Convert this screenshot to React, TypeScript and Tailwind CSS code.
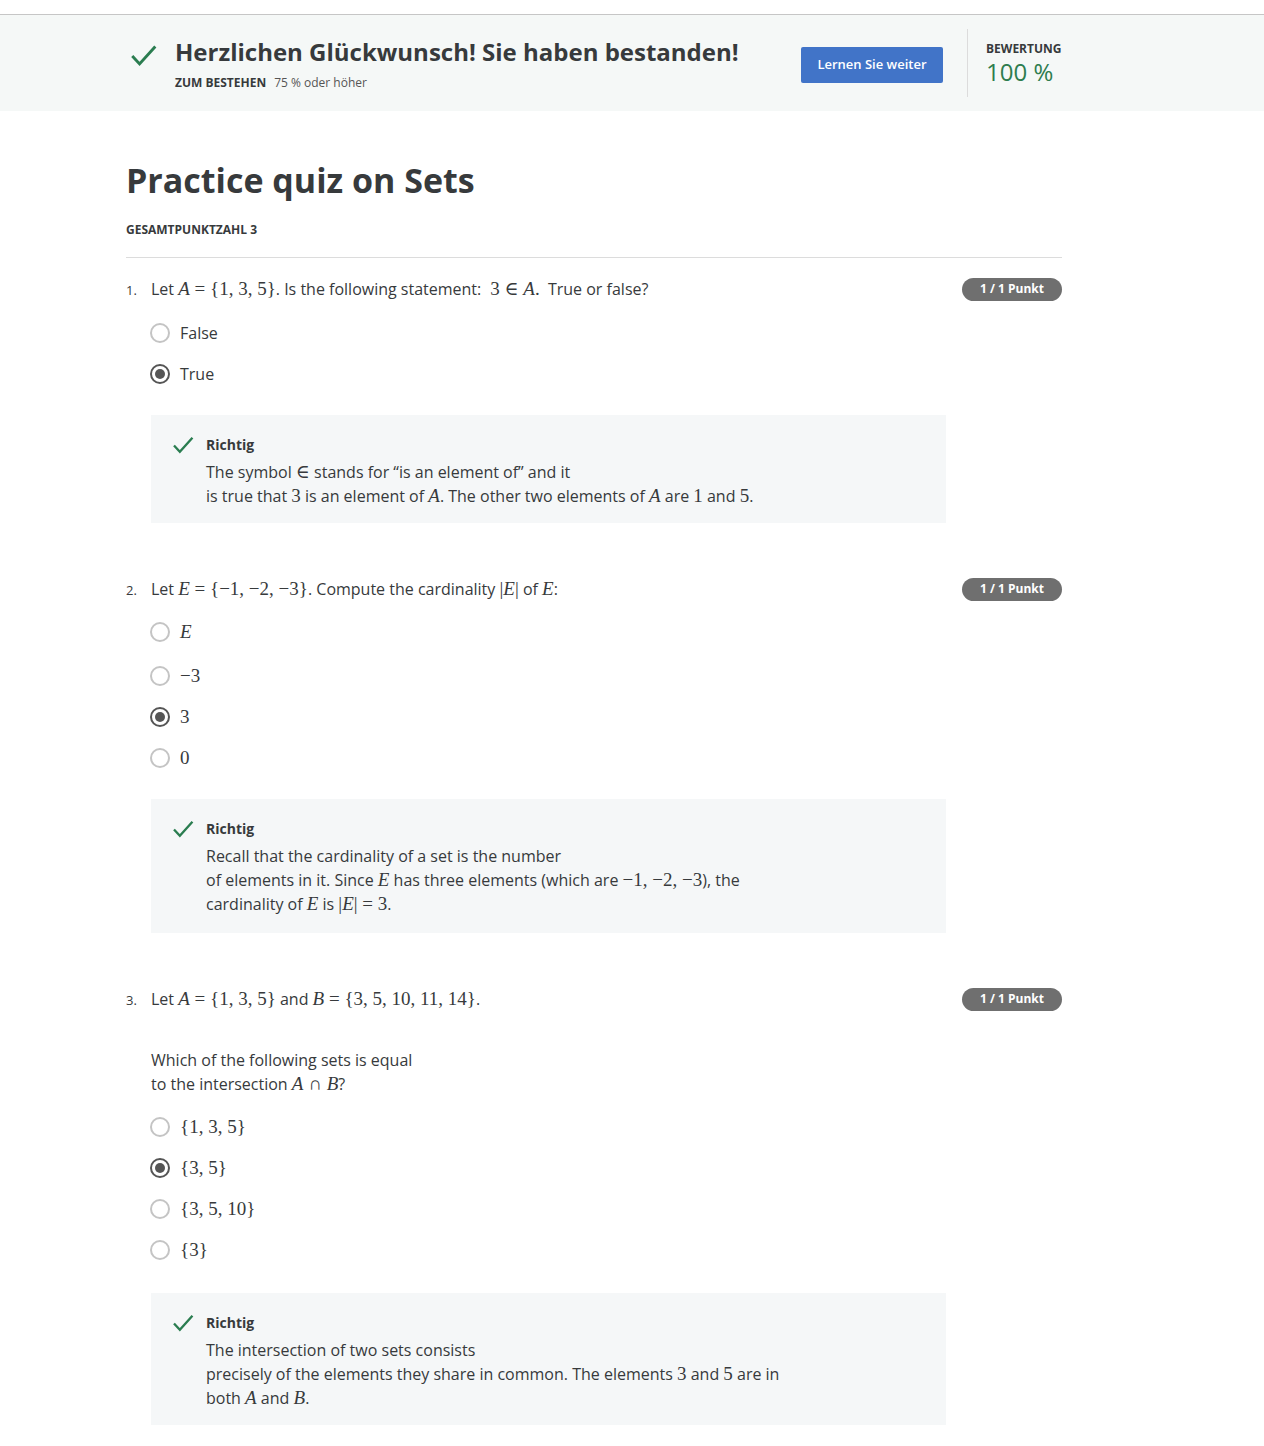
import type { ReactNode } from 'react';

const serif = "font-['Liberation_Serif','DejaVu_Serif',serif]";

function M({ children }: { children: ReactNode }) {
    return <span className={`${serif} text-[19px] leading-none`}>{children}</span>;
}

function V({ children }: { children: ReactNode }) {
    return <i className="italic">{children}</i>;
}

function Check({ className }: { className: string }) {
    return (
        <svg viewBox="0 0 24 20" className={className} fill="none">
            <path d="M2 10.5l6.5 7L22.5 2" stroke="#2a7d50" strokeWidth="2.6" />
        </svg>
    );
}

function Radio({ checked }: { checked?: boolean }) {
    if (checked) {
        return (
            <span className="flex h-5 w-5 shrink-0 items-center justify-center rounded-full border-2 border-[#555]">
                <span className="h-[10px] w-[10px] rounded-full bg-[#555]" />
            </span>
        );
    }
    return <span className="h-5 w-5 shrink-0 rounded-full border-2 border-[#c4c4c4]" />;
}

function Option({ checked, children }: { checked?: boolean; children: ReactNode }) {
    return (
        <div className="flex h-[41px] items-center gap-[10px] pl-[24px]">
            <Radio checked={checked} />
            <span className="text-[16px]">{children}</span>
        </div>
    );
}

function Badge() {
    return (
        <span className="flex h-[23px] w-[100px] shrink-0 items-center justify-center rounded-full bg-[#6f6f6f] text-[12px] font-bold text-white">
            1 / 1 Punkt
        </span>
    );
}

function Question({ n, children }: { n: number; children: ReactNode }) {
    return (
        <div className="flex items-center justify-between">
            <div className="flex items-baseline">
                <span className="w-[25px] text-[13px]">{n}.</span>
                <span className="text-[16px] leading-6">{children}</span>
            </div>
            <Badge />
        </div>
    );
}

function Feedback({ tall, children }: { tall?: boolean; children: ReactNode }) {
    return (
        <div
            className={`ml-[25px] w-[795px] bg-[#f5f7f8] pl-[21px] pr-6 pt-[19px] ${tall ? 'pb-[17px]' : 'pb-[15px]'}`}
        >
            <div className="flex items-center gap-[12px]">
                <Check className="h-[18px] w-[22px] shrink-0" />
                <span className="text-[14px] font-bold">Richtig</span>
            </div>
            <div className="pl-[34px] pt-[5px] text-[16px] leading-6">{children}</div>
        </div>
    );
}

export default function App() {
    return (
        <div className="min-h-screen bg-white pt-[14px] font-['Open_Sans',sans-serif] text-[#373a3c]">
            <div className="border-t border-[#c6c6c6] bg-[#f5f8f7]">
                <div className="ml-[126px] flex h-[96px] w-[936px] items-center">
                    <div className="flex min-w-0 flex-1 items-start gap-[18px] pl-[4px]">
                        <Check className="mt-[8px] h-[23px] w-[27px] shrink-0" />
                        <div>
                            <h1 className="whitespace-nowrap text-[24px] font-bold leading-8">
                                Herzlichen Glückwunsch! Sie haben bestanden!
                            </h1>
                            <p className="mt-[7px] whitespace-nowrap text-[12px] leading-4">
                                <span className="mr-[8px] font-bold">ZUM BESTEHEN</span>
                                <span className="text-[#555]">75 % oder höher</span>
                            </p>
                        </div>
                    </div>
                    <button className="mr-[24px] mt-[4px] h-[36px] w-[142px] shrink-0 rounded-[2px] bg-[#4174c8] text-[13px] font-semibold text-white">
                        Lernen Sie weiter
                    </button>
                    <div className="h-[68px] w-px shrink-0 bg-[#dcdcdc]" />
                    <div className="ml-[18px] w-[76px] shrink-0">
                        <div className="whitespace-nowrap text-[12px] font-bold">BEWERTUNG</div>
                        <div className="whitespace-nowrap text-[24px] leading-7 text-[#2e7d4f]">100 %</div>
                    </div>
                </div>
            </div>

            <div className="ml-[126px] w-[936px] pb-[20px]">
                <h2 className="mt-[47px] text-[34px] font-bold leading-[44px]">Practice quiz on Sets</h2>
                <div className="mt-[19px] text-[12px] font-bold">GESAMTPUNKTZAHL 3</div>
                <div className="mt-[18px] h-px bg-[#dcdcdc]" />

                <div className="mt-[19px]">
                    <Question n={1}>
                        Let <M><V>A</V> = {'{'}1, 3, 5{'}'}</M>. Is the following statement:{' '}
                        <M>&nbsp;3 ∈ <V>A</V>.</M>&nbsp; True or false?
                    </Question>
                    <div className="mt-[11px]">
                        <Option>False</Option>
                        <Option checked>True</Option>
                    </div>
                    <div className="mt-[21px]">
                        <Feedback>
                            The symbol <M>∈</M> stands for “is an element of” and it
                            <br />
                            is true that <M>3</M> is an element of <M><V>A</V></M>. The other two elements of{' '}
                            <M><V>A</V></M> are <M>1</M> and <M>5</M>.
                        </Feedback>
                    </div>
                </div>

                <div className="mt-[54px]">
                    <Question n={2}>
                        Let <M><V>E</V> = {'{'}−1, −2, −3{'}'}</M>. Compute the cardinality <M>|<V>E</V>|</M> of{' '}
                        <M><V>E</V></M>:
                    </Question>
                    <div className="mt-[10px]">
                        <div className="pb-[3px]">
                            <Option><M><V>E</V></M></Option>
                        </div>
                        <Option><M>−3</M></Option>
                        <Option checked><M>3</M></Option>
                        <Option><M>0</M></Option>
                    </div>
                    <div className="mt-[21px]">
                        <Feedback tall>
                            Recall that the cardinality of a set is the number
                            <br />
                            of elements in it. Since <M><V>E</V></M> has three elements (which are{' '}
                            <M>−1, −2, −3</M>), the
                            <br />
                            cardinality of <M><V>E</V></M> is <M>|<V>E</V>| = 3</M>.
                        </Feedback>
                    </div>
                </div>

                <div className="mt-[54px]">
                    <Question n={3}>
                        Let <M><V>A</V> = {'{'}1, 3, 5{'}'}</M> and <M><V>B</V> = {'{'}3, 5, 10, 11, 14{'}'}</M>.
                    </Question>
                    <p className="ml-[25px] mt-[37px] text-[16px] leading-6">
                        Which of the following sets is equal
                        <br />
                        to the intersection <M><V>A</V> ∩ <V>B</V></M>?
                    </p>
                    <div className="mt-[10px]">
                        <Option><M>{'{'}1, 3, 5{'}'}</M></Option>
                        <Option checked><M>{'{'}3, 5{'}'}</M></Option>
                        <Option><M>{'{'}3, 5, 10{'}'}</M></Option>
                        <Option><M>{'{'}3{'}'}</M></Option>
                    </div>
                    <div className="mt-[23px]">
                        <Feedback>
                            The intersection of two sets consists
                            <br />
                            precisely of the elements they share in common. The elements <M>3</M> and <M>5</M> are in
                            <br />
                            both <M><V>A</V></M> and <M><V>B</V></M>.
                        </Feedback>
                    </div>
                </div>
            </div>
        </div>
    );
}
